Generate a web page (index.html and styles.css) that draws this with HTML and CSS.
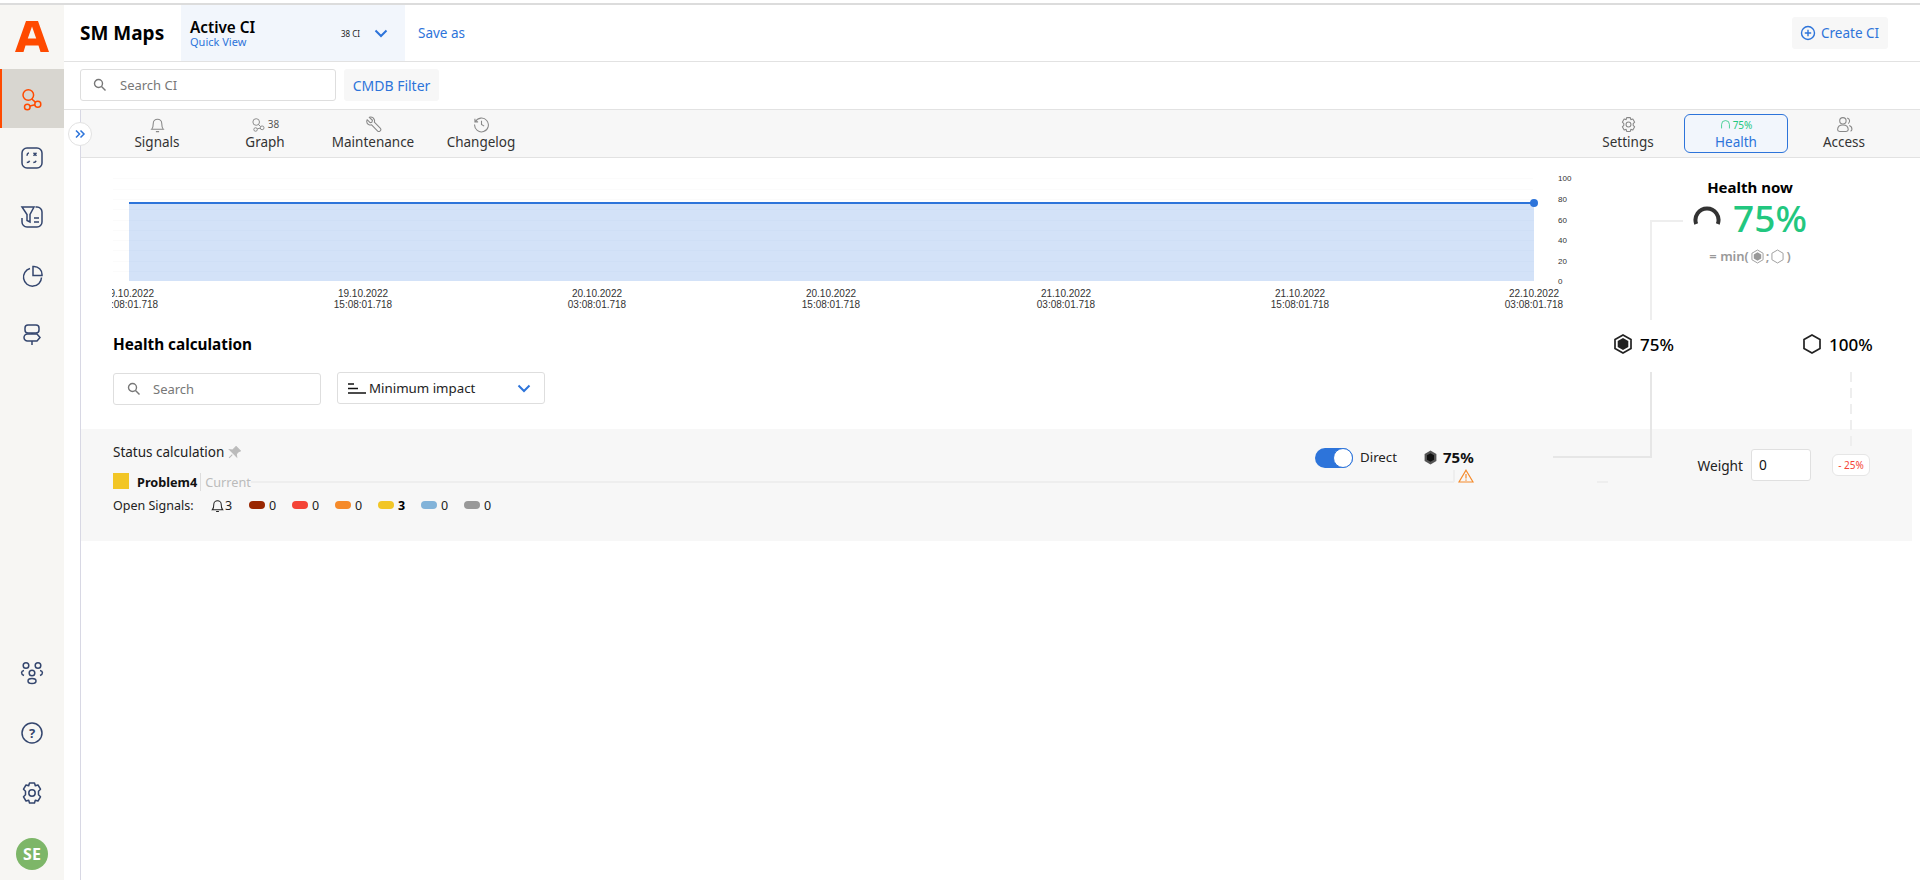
FILE: index.html
```html
<!DOCTYPE html>
<html lang="en">
<head>
<meta charset="utf-8">
<title>SM Maps</title>
<link rel="stylesheet" href="styles.css">
</head>
<body>
<div class="app">
  <aside class="sidebar">
    <div class="logo">
      <svg width="34" height="32" viewBox="0 0 34 32"><path fill="#ff4a00" fill-rule="evenodd" d="M0 32 11 1h12l11 31h-8.500l-2-6.500H10.500l-2 6.500ZM12.800 18.500h8.400L17 6.500Z"/></svg>
    </div>
    <nav class="side-nav">
      <a class="side-item active">
        <svg class="ic24 orange" viewBox="0 0 24 24"><circle cx="8.300" cy="8" r="5.300"/><circle cx="7.300" cy="20" r="2.800"/><circle cx="17.800" cy="17.300" r="3"/><path d="M10 18.900 15 17.800M11.800 12l3.800 3.400"/></svg>
      </a>
      <a class="side-item">
        <svg class="ic24" viewBox="0 0 24 24"><rect x="2" y="2" width="20" height="20" rx="5"/><path d="m13.500 6.800 3 3M16.500 6.800l-3 3M7 9.800c0-1.400.6-2.500 1.800-3M6.800 16.500c1.400 0 2.400-.6 2.800-1.800M13.300 16.500c1.400 0 2.400-.6 2.800-1.800"/></svg>
      </a>
      <a class="side-item">
        <svg class="ic24" viewBox="0 0 24 24"><path d="M2 2h12l-4 7.500V17l-3-1.500V9.500ZM15.500 2h1.500a5 5 0 0 1 5 5v10a5 5 0 0 1-5 5H7a5 5 0 0 1-5-5v-4M14 13h5M14 17h5"/></svg>
      </a>
      <a class="side-item">
        <svg class="ic24" viewBox="0 0 24 24"><path d="M10 4.500a9 9 0 1 0 11.500 9"/><path d="M13 2.500h1a8 8 0 0 1 8 8v1h-9Z"/></svg>
      </a>
      <a class="side-item">
        <svg class="ic24" viewBox="0 0 24 24"><rect x="5" y="2" width="14" height="8" rx="3"/><path d="M7.500 11H17l3 3.500-3 3.500H7.500a3.500 3.500 0 0 1 0-7ZM12 10v1M12 18v4"/></svg>
      </a>
    </nav>
    <nav class="side-bottom">
      <a class="side-item">
        <svg class="ic24" viewBox="0 0 24 24"><circle cx="6" cy="4.500" r="2.800"/><circle cx="18" cy="4.500" r="2.800"/><circle cx="12" cy="12" r="2.800"/><ellipse cx="12" cy="20" rx="4" ry="2.500"/><path d="M4 9.500C1 10 .5 13 4 14.500M20 9.500c3 .5 3.500 3.500 0 5"/></svg>
      </a>
      <a class="side-item">
        <svg class="ic24" viewBox="0 0 24 24"><circle cx="12" cy="12" r="10"/><text class="q" x="12" y="16.500" text-anchor="middle">?</text></svg>
      </a>
      <a class="side-item">
        <svg class="ic24" viewBox="0 0 24 24"><circle cx="12" cy="12" r="3.200"/><path d="M9.500 2h5l.8 2.800 2.700-.8 2.500 4.200-2 2 0 3.600 2 2-2.500 4.200-2.700-.8-.8 2.800h-5l-.8-2.800-2.700.8L3.500 15.800l2-2v-3.600l-2-2L6 4l2.700.8Z" stroke-linejoin="round"/></svg>
      </a>
      <div class="avatar">SE</div>
    </nav>
  </aside>

  <main class="main">
    <header class="topbar">
      <h1 class="app-title">SM Maps</h1>
      <div class="view-picker">
        <div class="view-names">
          <div class="view-name">Active CI</div>
          <div class="view-sub">Quick View</div>
        </div>
        <span class="view-count">38 CI</span>
        <svg class="chev" viewBox="0 0 14 9"><path d="m1.500 1.500 5.500 5.500 5.500-5.500"/></svg>
      </div>
      <a class="save-as">Save as</a>
      <button class="btn-soft create">
        <svg class="plus" viewBox="0 0 16 16"><circle cx="8" cy="8" r="6.500"/><path d="M8 4.800v6.400M4.800 8h6.400"/></svg>
        Create CI
      </button>
    </header>

    <div class="filterbar">
      <label class="search search-ci">
        <svg class="mag" viewBox="0 0 14 14"><circle cx="5.500" cy="5.500" r="4"/><path d="m8.500 8.500 4 4"/></svg>
        <span>Search CI</span>
      </label>
      <button class="btn-soft cmdb">CMDB Filter</button>
    </div>

    <section class="workspace">
      <button class="expand">
        <svg viewBox="0 0 12 12"><path d="m2 2.500 3.500 3.500L2 9.500M6.500 2.500 10 6l-3.500 3.500"/></svg>
      </button>
      <div class="tabs">
        <div class="tab-group">
          <div class="tab">
            <div class="tab-top"><svg class="tic" viewBox="0 0 16 16"><path d="M2.500 12.500c1-1 1.500-2 1.500-5.500a4 4 0 0 1 8 0c0 3.500.5 4.500 1.500 5.500ZM6.500 14.700h3"/></svg></div>
            <div class="tab-label">Signals</div>
          </div>
          <div class="tab">
            <div class="tab-top"><svg class="tic sm" viewBox="0 0 24 24"><circle cx="8.300" cy="8" r="5.300"/><circle cx="7.300" cy="20" r="2.800"/><circle cx="17.800" cy="17.300" r="3"/><path d="M10 18.900 15 17.800M11.800 12l3.800 3.400"/></svg><span>38</span></div>
            <div class="tab-label">Graph</div>
          </div>
          <div class="tab">
            <div class="tab-top"><svg class="tic" viewBox="0 0 16 16"><path d="M2 3.500 4.800 6.300 6.500 5.800 7 4 4 1.200C6 .7 8 1.500 8.800 3.500 9.200 4.500 9 5.300 8.800 5.800l5.500 5.500a1.800 1.800 0 0 1-2.600 2.600L6.200 8.300C5.700 8.500 4.800 8.700 3.800 8.300 1.800 7.500 1.300 5.500 2 3.500Z" stroke-linejoin="round"/></svg></div>
            <div class="tab-label">Maintenance</div>
          </div>
          <div class="tab">
            <div class="tab-top"><svg class="tic" viewBox="0 0 16 16"><path d="M2.200 5.500A6.500 6.500 0 1 1 1.500 8M1.800 2.500v3h3M8 4.500V8l2.500 1.500"/></svg></div>
            <div class="tab-label">Changelog</div>
          </div>
        </div>
        <div class="tab-group">
          <div class="tab">
            <div class="tab-top"><svg class="tic" viewBox="0 0 16 16"><circle cx="8" cy="8" r="2.300"/><path d="M6.300 1.500h3.400l.5 1.900 1.900-.5 1.700 2.900-1.400 1.400v1.600l1.400 1.400-1.700 2.900-1.900-.5-.5 1.900H6.300l-.5-1.900-1.900.5-1.700-2.900 1.400-1.400V7.200L2.200 5.800l1.700-2.900 1.900.5Z" stroke-linejoin="round"/></svg></div>
            <div class="tab-label">Settings</div>
          </div>
          <div class="tab selected">
            <div class="tab-top health-mini"><svg class="tic arc" viewBox="0 0 14 14"><path d="M2 12V7a5 5 0 0 1 10 0v5"/></svg><span>75%</span></div>
            <div class="tab-label">Health</div>
          </div>
          <div class="tab">
            <div class="tab-top"><svg class="tic" viewBox="0 0 16 16"><circle cx="6.500" cy="4.500" r="3"/><path d="M1.500 13c0-2.800 2-4.500 5-4.500s5 1.700 5 4.500c0 1-1 1.500-2 1.500h-6c-1 0-2-.5-2-1.500ZM10.500 1.800a3 3 0 0 1 1 5.400M12.500 9c1.500.5 2.500 2 2.500 3.500 0 .8-.5 1.500-1.300 1.800"/></svg></div>
            <div class="tab-label">Access</div>
          </div>
        </div>
      </div>

      <div class="content">
        <div class="overview">
          <svg class="chart" width="1468" height="152" viewBox="112 158 1468 152">
            <g class="grid">
              <path d="M113 178.500h1420M113 189.500h1420M113 199.500h1420M113 209.500h1420M113 220.500h1420M113 230.500h1420M113 240.500h1420M113 250.500h1420M113 261.500h1420M113 271.500h1420"/>
            </g>
            <rect class="area" x="129" y="203" width="1405" height="78"/>
            <path class="gridover" d="M129 209.500h1405M129 220.500h1405M129 230.500h1405M129 240.500h1405M129 250.500h1405M129 261.500h1405M129 271.500h1405"/>
            <path class="series" d="M129 203H1534"/>
            <circle class="dot" cx="1534" cy="203" r="4"/>
            <g class="ylab">
              <text x="1558" y="181">100</text>
              <text x="1558" y="202">80</text>
              <text x="1558" y="223">60</text>
              <text x="1558" y="243">40</text>
              <text x="1558" y="264">20</text>
              <text x="1558" y="284">0</text>
            </g>
            <g class="xlab">
              <text x="129" y="297">19.10.2022</text><text x="129" y="308">03:08:01.718</text>
              <text x="363" y="297">19.10.2022</text><text x="363" y="308">15:08:01.718</text>
              <text x="597" y="297">20.10.2022</text><text x="597" y="308">03:08:01.718</text>
              <text x="831" y="297">20.10.2022</text><text x="831" y="308">15:08:01.718</text>
              <text x="1066" y="297">21.10.2022</text><text x="1066" y="308">03:08:01.718</text>
              <text x="1300" y="297">21.10.2022</text><text x="1300" y="308">15:08:01.718</text>
              <text x="1534" y="297">22.10.2022</text><text x="1534" y="308">03:08:01.718</text>
            </g>
          </svg>
          <div class="health-now">
            <div class="hn-title">Health now</div>
            <div class="hn-value">
              <svg class="gauge" viewBox="0 0 28 20"><path d="M3.200 18a11.500 11.500 0 1 1 21.600 0"/></svg>
              <span>75%</span>
            </div>
            <div class="hn-formula"><span>= min(</span><svg class="hex-f" viewBox="0 0 14 16"><path d="M7 1 13 4.500v7L7 15 1 11.500v-7Z"/><path class="fill" d="M7 3.500 11 5.800v4.400L7 12.500 3 10.200V5.800Z"/></svg><span>;</span><svg class="hex-f" viewBox="0 0 14 16"><path d="M7 1 13 4.500v7L7 15 1 11.500v-7Z"/></svg><span>)</span></div>
          </div>
        </div>

        <div class="calc-head">
          <h2 class="calc-title">Health calculation</h2>
          <div class="calc-val">
            <svg class="hex" viewBox="0 0 18 20"><path d="M9 1 17 5.500v9L9 19 1 14.500v-9Z"/><path class="fill" d="M9 4 14.300 7v6L9 16 3.700 13V7Z"/></svg>
            <span>75%</span>
          </div>
          <div class="calc-val last">
            <svg class="hex" viewBox="0 0 18 20"><path d="M9 1 17 5.500v9L9 19 1 14.500v-9Z"/></svg>
            <span>100%</span>
          </div>
        </div>

        <div class="toolbar">
          <label class="search search-calc">
            <svg class="mag" viewBox="0 0 14 14"><circle cx="5.500" cy="5.500" r="4"/><path d="m8.500 8.500 4 4"/></svg>
            <span>Search</span>
          </label>
          <div class="select">
            <svg class="sort" viewBox="0 0 18 11"><path d="M0 1h6M0 5.500h10M0 10h18"/></svg>
            <span>Minimum impact</span>
            <svg class="chev" viewBox="0 0 14 9"><path d="m1.500 1.500 5.500 5.500 5.500-5.500"/></svg>
          </div>
        </div>

        <div class="status">
          <div class="status-main">
            <div class="st-row1">
              <div class="st-title">Status calculation
                <svg class="pin" viewBox="0 0 12 12"><path d="M7.500.5 11.500 4.500l-1.500.5-2.300 2.300.3 2.700L1.500 3.500l2.700.3L6.500 1.500ZM4 8 1 11"/></svg>
              </div>
              <div class="toggle"><span class="knob"></span></div>
              <div class="toggle-label">Direct</div>
              <svg class="hex-sm" viewBox="0 0 12 14"><path d="M6 .5 11.500 3.700v6.600L6 13.500.5 10.300V3.700Z"/><path class="fill" d="M6 3 9.300 5v4L6 11 2.700 9V5Z"/></svg>
              <div class="st-val">75%</div>
            </div>
            <div class="st-row2">
              <span class="sq"></span>
              <span class="st-name">Problem4</span>
              <span class="st-current">Current</span>
              <span class="connector"></span>
              <svg class="warn" viewBox="0 0 16 14"><path d="M8 1.200 15 13H1ZM8 5v4.500M8 10.500v1.200"/></svg>
            </div>
            <div class="st-row3">
              <span class="os-label">Open Signals:</span>
              <svg class="bell" viewBox="0 0 14 16"><path d="M1.500 12.500c1-1 1.500-2 1.500-5.500a4 4 0 0 1 8 0c0 3.500.5 4.500 1.500 5.500ZM5.500 14.500h3"/></svg>
              <span class="os-total">3</span>
              <span class="pill p1"></span><span class="os-n">0</span>
              <span class="pill p2"></span><span class="os-n">0</span>
              <span class="pill p3"></span><span class="os-n">0</span>
              <span class="pill p4"></span><span class="os-n strong">3</span>
              <span class="pill p5"></span><span class="os-n">0</span>
              <span class="pill p6"></span><span class="os-n">0</span>
            </div>
          </div>
          <div class="weight">
            <span class="w-label">Weight</span>
            <div class="w-input">0</div>
            <span class="w-badge">- 25%</span>
          </div>
        </div>

        <svg class="links" width="1839" height="400" viewBox="81 158 1839 400">
          <path d="M1683 221H1651V320"/>
          <path class="inrow" d="M1651 372V457H1553"/>
          <path class="dash" d="M1851 372V450"/>
          <path d="M1597 482H1608M1454 470V482"/>
        </svg>
      </div>
    </section>
  </main>
</div>
</body>
</html>
```

FILE: styles.css
```css
* { box-sizing: border-box; }
html, body { margin: 0; height: 100%; }
body {
  font-family: "Noto Sans", "Open Sans", sans-serif;
  color: #1a1a1a;
  background: #fff;
  overflow: hidden;
}
.app {
  display: flex;
  height: 880px;
  padding-top: 5px;
  background: linear-gradient(#fff 3px, #dcdcdc 3px, #dcdcdc 5px, #fff 5px);
}
button { font: inherit; border: 0; cursor: pointer; }
svg { display: block; flex: none; }

/* Sidebar */
.sidebar {
  width: 64px;
  flex: none;
  background: #f7f6f3;
  display: flex;
  flex-direction: column;
}
.logo { height: 64px; flex: none; display: flex; justify-content: center; align-items: flex-start; padding-top: 15px; }
.side-item {
  height: 60px;
  display: flex;
  align-items: center;
  justify-content: center;
}
.side-nav .side-item { height: 59px; }
.side-item.active { background: #d8d6d0; border-left: 2px solid #ff4a00; padding-right: 2px; }
.ic24 { width: 24px; height: 24px; fill: none; stroke: #34466e; stroke-width: 1.500; }
.ic24.orange { stroke: #ff4a00; }
.q { font: 700 13px "Noto Sans", sans-serif; fill: #34466e; stroke: none; }
.side-bottom { margin-top: auto; padding-bottom: 10px; }
.avatar {
  width: 32px; height: 32px; border-radius: 50%;
  margin: 15px auto 0;
  background: #7db668;
  color: #fff;
  font-size: 16px; font-weight: 700;
  display: flex; align-items: center; justify-content: center;
}

/* Main */
.main { flex: 1; min-width: 0; display: flex; flex-direction: column; }
.topbar {
  height: 57px;
  flex: none;
  border-bottom: 1px solid #e2e2e2;
  display: flex;
  align-items: center;
  padding-left: 16px;
  padding-right: 32px;
}
.app-title { margin: 0; width: 101px; font-size: 19px; font-weight: 700; color: #000; white-space: nowrap; }
.view-picker {
  width: 224px; height: 56px;
  background: #f2f6fc;
  display: flex;
  align-items: center;
  padding-left: 9px;
}
.view-names { width: 151px; }
.view-name { font-size: 15.300px; font-weight: 600; line-height: 18px; color: #000; }
.view-sub { font-size: 11px; line-height: 12px; color: #2d74da; }
.view-count { width: 33px; font-size: 8px; color: #222; }
.chev { width: 14px; height: 9px; fill: none; stroke: #2d74da; stroke-width: 2; }
.save-as { margin-left: 13px; font-size: 13.500px; color: #2d74da; }
.btn-soft {
  height: 32px;
  background: #f7f7f7;
  color: #2d74da;
  border-radius: 3px;
  font-size: 13.500px;
  padding: 0 8px;
  display: flex;
  align-items: center;
  gap: 5px;
}
.cmdb { width: 95px; font-size: 14px; justify-content: center; padding: 0; white-space: nowrap; }
.create { margin-left: auto; width: 96px; white-space: nowrap; }
.plus { width: 16px; height: 16px; fill: none; stroke: #2d74da; stroke-width: 1.400; }

.filterbar {
  height: 48px;
  flex: none;
  border-bottom: 1px solid #e2e2e2;
  padding: 7px 0 0 16px;
  display: flex;
  gap: 8px;
  align-items: flex-start;
}
.search {
  height: 32px;
  background: #fff;
  border: 1px solid #dedede;
  border-radius: 3px;
  display: flex;
  align-items: center;
  font-size: 13px;
  color: #777;
}
.search-ci { width: 256px; padding-left: 12px; gap: 13px; }
.mag { width: 14px; height: 14px; fill: none; stroke: #777; stroke-width: 1.400; }

/* Workspace */
.workspace {
  flex: 1;
  margin-left: 16px;
  border-left: 1px solid #d8d8e4;
  position: relative;
  display: flex;
  flex-direction: column;
}
.expand {
  position: absolute;
  left: -13px; top: 12px;
  width: 24px; height: 24px;
  border-radius: 50%;
  background: #fff;
  border: 1px solid #e2e2e2;
  padding: 5px;
  z-index: 2;
}
.expand svg { width: 12px; height: 12px; fill: none; stroke: #2d74da; stroke-width: 1.500; }
.tabs {
  height: 48px;
  flex: none;
  background: #f7f7f7;
  border-bottom: 1px solid #e2e2e2;
  padding: 4px 22px 0 22px;
  display: flex;
  justify-content: space-between;
}
.tab-group { display: flex; }
.tab {
  width: 108px;
  height: 39px;
  display: flex;
  flex-direction: column;
  align-items: center;
  color: #333;
}
.tab-top {
  height: 20px;
  display: flex;
  align-items: center;
  justify-content: center;
  gap: 2px;
  font-size: 10px;
  color: #555;
}
.tic { width: 17px; height: 17px; fill: none; stroke: #888; stroke-width: 1; }
.tic.sm { width: 15px; height: 15px; stroke-width: 1.500; }
.tab-label { font-size: 13.500px; line-height: 17px; white-space: nowrap; }
.tab.selected {
  width: 104px;
  margin: 0 2px;
  background: #f2f6fc;
  border: 1px solid #2d74da;
  border-radius: 6px;
  color: #2d74da;
}
.tab.selected .tab-top { height: 19px; }
.health-mini { color: #22c77f; }
.tic.arc { width: 11px; height: 11px; stroke: #22c77f; stroke-width: 1; }

/* Content */
.content { flex: 1; position: relative; }
.overview { display: flex; height: 152px; padding-left: 31px; }
.chart { flex: none; }
.grid path { stroke: #fbfbfb; stroke-width: 1; fill: none; }
.gridover { stroke: #cfdff6; stroke-width: 1; fill: none; }
.area { fill: #d3e2f8; }
.series { stroke: #2d74da; stroke-width: 2; fill: none; }
.dot { fill: #2d74da; }
.ylab text { font: 8px "Liberation Sans", sans-serif; fill: #333; text-anchor: start; }
.xlab text { font: 10px "Liberation Sans", sans-serif; fill: #333; text-anchor: middle; }

.health-now {
  width: 170px;
  margin-left: 85px;
  padding-top: 20px;
  display: flex;
  flex-direction: column;
  align-items: center;
  flex: none;
}
.hn-title { font-size: 15px; font-weight: 700; line-height: 18px; color: #000; }
.hn-value {
  display: flex;
  align-items: center;
  gap: 12px;
  height: 44px;
  line-height: 44px;
  color: #22c77f;
  font-size: 37px;
  font-weight: 500;
}
.gauge { width: 28px; height: 20px; fill: none; stroke: #333; stroke-width: 4; margin-bottom: 4px; }
.hn-formula {
  margin-top: 7px;
  font-size: 13px;
  font-weight: 600;
  color: #999;
  display: flex;
  align-items: center;
  gap: 1px;
  white-space: pre;
}
.hex-f { width: 13px; height: 15px; margin: 0 1px; fill: none; stroke: #999; stroke-width: 1; }
.hex-f .fill { fill: #999; stroke: none; }

.calc-head {
  margin-top: 22px;
  height: 24px;
  padding-left: 32px;
  display: flex;
  align-items: center;
}
.calc-title { margin: 0; flex: none; font-size: 15.300px; font-weight: 700; color: #000; width: 1501px; white-space: nowrap; }
.calc-val { flex: none; display: flex; align-items: center; gap: 8px; font-size: 17px; font-weight: 500; color: #000; width: 189px; }
.calc-val.last { width: auto; }
.hex { width: 18px; height: 20px; fill: none; stroke: #222; stroke-width: 1.700; }
.hex .fill { fill: #222; stroke: none; }

.toolbar { margin-top: 16px; padding-left: 32px; display: flex; gap: 16px; height: 32px; }
.search-calc { width: 208px; padding-left: 13px; gap: 12px; margin-top: 1px; }
.select {
  width: 208px; height: 32px;
  border: 1px solid #dedede;
  border-radius: 3px;
  display: flex;
  align-items: center;
  padding: 0 13px 0 10px;
  font-size: 13.300px;
  color: #222;
}
.sort { width: 18px; height: 11px; stroke: #111; stroke-width: 1.500; fill: none; margin-right: 3px; }
.select .chev { margin-left: auto; }

.status {
  margin: 25px 8px 0 0;
  height: 112px;
  background: #f7f7f7;
  display: flex;
  padding: 13px 42px 0 32px;
}
.status-main { width: 1364px; flex: none; }
.st-row1 { display: flex; align-items: flex-start; height: 26px; }
.st-title { font-size: 13.500px; line-height: 20px; color: #222; display: flex; align-items: center; gap: 4px; margin-right: auto; }
.pin { width: 13px; height: 13px; fill: #bbb; stroke: #bbb; stroke-width: 1; }
.toggle {
  width: 38px; height: 20px;
  margin-top: 6px;
  background: #2d74da;
  border-radius: 10px;
  position: relative;
}
.knob {
  position: absolute;
  right: 0; top: 0;
  width: 20px; height: 20px;
  background: #fff;
  border: 1px solid #2d74da;
  border-radius: 50%;
}
.toggle-label { margin: 6px 0 0 7px; font-size: 13.300px; line-height: 18px; width: 64px; color: #222; }
.hex-sm { width: 13px; height: 15px; margin: 8px 6px 0 0; fill: #555; stroke: none; }
.hex-sm .fill { fill: #111; }
.st-val { margin-top: 5px; width: 34px; font-size: 15px; line-height: 20px; font-weight: 700; color: #111; white-space: nowrap; }

.st-row2 {
  margin-top: 5px;
  height: 18px;
  display: flex;
  align-items: center;
  padding-right: 23px;
  position: relative;
}
.sq { width: 16px; height: 16px; background: #f2c626; margin-right: 8px; align-self: flex-start; }
.st-name { font-size: 12.700px; font-weight: 700; color: #111; padding-right: 3px; border-right: 1px solid #ddd; line-height: 18px; margin-right: 4px; }
.st-current { font-size: 12.700px; color: #bbb; }
.connector { flex: 1; height: 2px; background: #eee; }
.warn {
  position: absolute;
  right: 3px; top: -4px;
  width: 16px; height: 14px;
  fill: none; stroke: #f58a2a; stroke-width: 1.200;
}
.st-row3 {
  margin-top: 4px;
  height: 20px;
  display: flex;
  align-items: center;
  font-size: 12.500px;
  color: #222;
}
.os-label { width: 98px; white-space: nowrap; }
.bell { width: 13px; height: 15px; fill: none; stroke: #222; stroke-width: 1.100; }
.os-total { width: 24px; margin-left: 1px; }
.pill { width: 16px; height: 8px; border-radius: 4px; margin-right: 4px; }
.os-n { width: 23px; }
.os-n.strong { font-weight: 700; color: #000; }
.p1 { background: #992600; }
.p2 { background: #f44336; }
.p3 { background: #f58a2a; }
.p4 { background: #f2c626; }
.p5 { background: #82b3d9; }
.p6 { background: #999; }

.weight { display: flex; align-items: center; margin-left: auto; height: 32px; margin-top: 7px; font-size: 13.700px; }
.w-label { margin-right: 8px; color: #222; }
.w-input {
  width: 60px; height: 32px;
  background: #fff;
  border: 1px solid #e0e0e0;
  border-radius: 3px;
  line-height: 30px;
  padding-left: 7px;
  color: #111;
}
.w-badge {
  width: 38px; height: 22px;
  margin-left: 21px;
  background: #fff;
  border: 1px solid #e6e6e6;
  border-radius: 6px;
  font-size: 10px;
  color: #f44336;
  display: flex; align-items: center; justify-content: center;
  white-space: nowrap;
}

.links { position: absolute; left: 0; top: 0; pointer-events: none; fill: none; stroke: #eee; stroke-width: 2; }
.links .dash { stroke-dasharray: 10 6; }
.links .inrow { stroke: #e6e6e6; }
```
